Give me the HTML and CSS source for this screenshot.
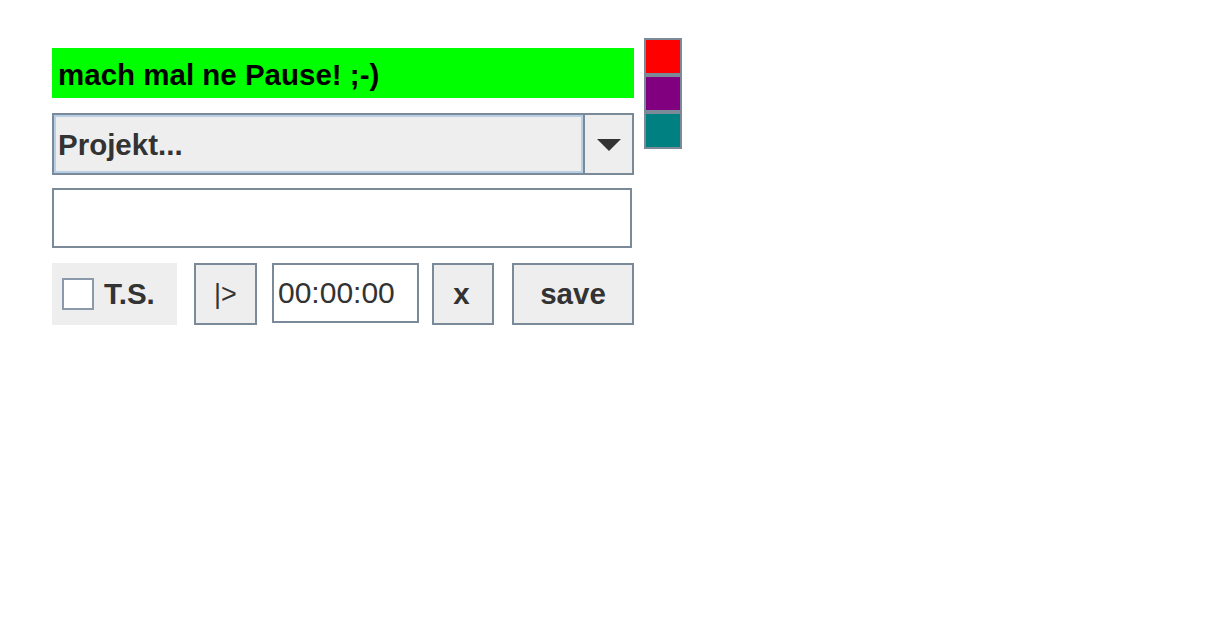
FILE: index.html
```html
<!DOCTYPE html>
<html lang="de">
<head>
<meta charset="utf-8">
<title>Pause</title>
<link rel="stylesheet" href="styles.css">
</head>
<body>
<div class="app">
  <div class="main">
    <div class="banner">mach mal ne Pause! ;-)</div>
    <div class="combo">
      <div class="combo-value">Projekt...</div>
      <div class="combo-arrow"><span class="tri"></span></div>
    </div>
    <div class="textfield"></div>
    <div class="toolbar">
      <div class="check-panel">
        <span class="checkbox"></span>
        <span class="check-label">T.S.</span>
      </div>
      <div class="btn btn-play">|&gt;</div>
      <div class="timefield">00:00:00</div>
      <div class="btn btn-x">x</div>
      <div class="btn btn-save">save</div>
    </div>
  </div>
  <div class="swatches">
    <div class="swatch red"></div>
    <div class="swatch purple"></div>
    <div class="swatch teal"></div>
  </div>
</div>
</body>
</html>
```

FILE: styles.css
```css
html, body {
  margin: 0;
  padding: 0;
  background: #ffffff;
}
body {
  font-family: "Liberation Sans", Arial, sans-serif;
  font-size: 29.5px;
  color: #333333;
}
.app {
  display: flex;
  gap: 10px;
  padding: 38px 0 0 52px;
}
.main {
  width: 582px;
  padding-top: 10px;
  display: flex;
  flex-direction: column;
}
.banner {
  height: 50px;
  background: #00ff00;
  color: #000000;
  font-weight: bold;
  display: flex;
  align-items: center;
  padding: 3px 0 0 6px;
  box-sizing: border-box;
}
.combo {
  margin-top: 15px;
  height: 62px;
  display: flex;
  box-sizing: border-box;
  border: 2px solid #7a8a99;
  background: #eeeeee;
}
.combo-value {
  flex: 1;
  border: 2px solid #b8cfe5;
  display: flex;
  align-items: center;
  padding: 2px 0 0 2px;
  font-weight: bold;
}
.combo-arrow {
  width: 47px;
  border-left: 2px solid #7a8a99;
  display: flex;
  align-items: center;
  justify-content: center;
}
.tri {
  width: 0;
  height: 0;
  border-left: 12px solid transparent;
  border-right: 12px solid transparent;
  border-top: 12px solid #333333;
  margin-top: 2px;
}
.textfield {
  margin-top: 13px;
  width: 580px;
  height: 60px;
  box-sizing: border-box;
  border: 2px solid #7a8a99;
  background: #ffffff;
}
.toolbar {
  margin-top: 15px;
  display: flex;
  align-items: flex-start;
  height: 62px;
}
.check-panel {
  width: 125px;
  height: 62px;
  background: #eeeeee;
  display: flex;
  align-items: center;
  box-sizing: border-box;
  padding-left: 10px;
}
.checkbox {
  width: 32px;
  height: 32px;
  box-sizing: border-box;
  border: 2px solid #8a9aab;
  background: #ffffff;
  display: inline-block;
}
.check-label {
  margin-left: 10px;
  font-weight: bold;
}
.btn {
  height: 62px;
  box-sizing: border-box;
  border: 2px solid #7a8a99;
  background: #eeeeee;
  display: flex;
  align-items: center;
  justify-content: center;
  font-weight: bold;
}
.btn-play {
  margin-left: 17px;
  width: 63px;
  font-weight: normal;
  font-size: 27px;
}
.timefield {
  margin-left: 15px;
  width: 147px;
  height: 60px;
  box-sizing: border-box;
  border: 2px solid #7a8a99;
  background: #ffffff;
  display: flex;
  align-items: center;
  padding-left: 4px;
  font-size: 30px;
}
.btn-x {
  margin-left: 13px;
  width: 62px;
  padding-right: 3px;
}
.btn-save {
  margin-left: 18px;
  width: 122px;
}
.swatches {
  display: flex;
  flex-direction: column;
}
.swatch {
  width: 38px;
  height: 37px;
  box-sizing: border-box;
  border: 2px solid #7a8a99;
}
.red { background: #ff0000; }
.purple { background: #800080; }
.teal { background: #008080; }
```
